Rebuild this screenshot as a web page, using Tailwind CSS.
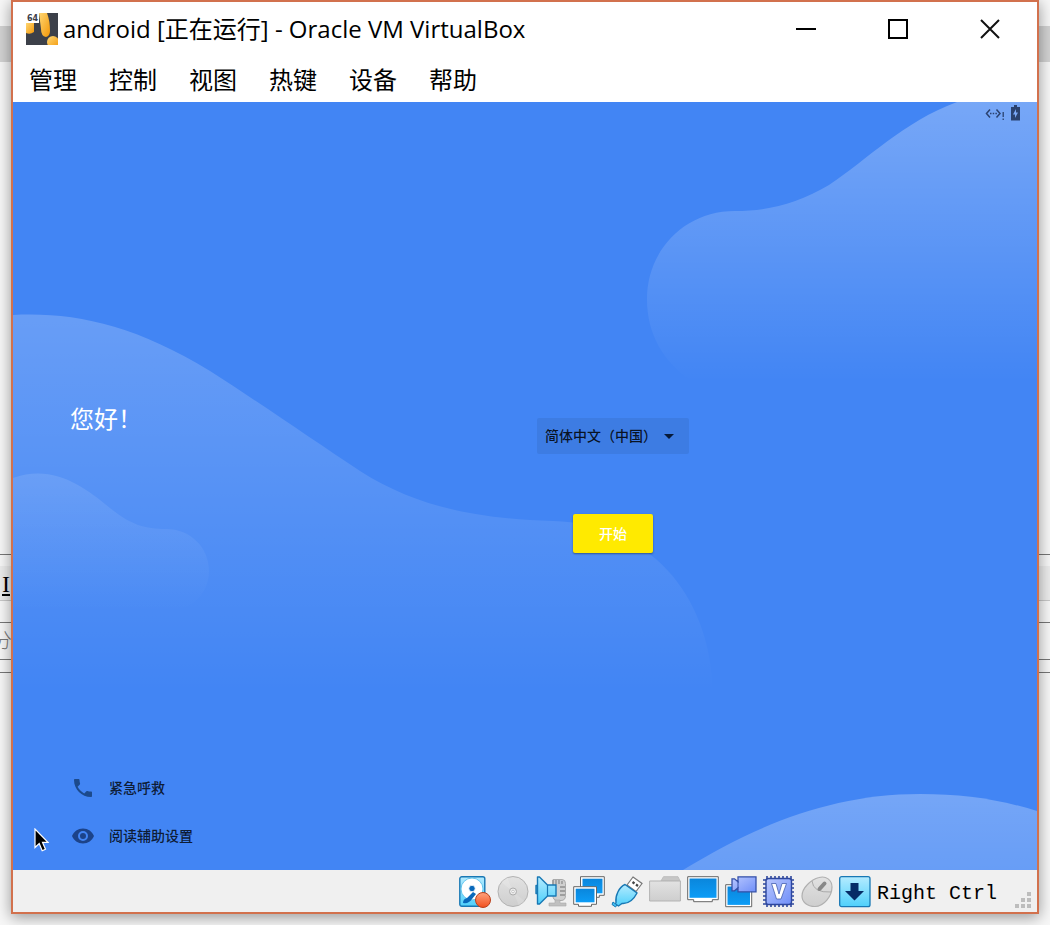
<!DOCTYPE html>
<html lang="zh-CN">
<head>
<meta charset="utf-8">
<meta name="viewport" content="width=device-width, initial-scale=1">
<title>android [正在运行] - Oracle VM VirtualBox</title>
<script src="https://cdn.jsdelivr.net/npm/@tailwindcss/browser@4"></script>
</head>
<body class="relative flex min-h-screen flex-col overflow-hidden bg-[#f7f7f7] px-[11px] pb-[11px] font-['Open_Sans','Noto_Sans_CJK_SC',sans-serif] text-black">

<!-- Document behind the window -->
<div class="absolute inset-0 flex flex-col font-['Liberation_Serif','Noto_Sans_CJK_SC',serif]">
  <div class="h-[26px]"></div>
  <div class="h-9 bg-[#d2d2d2]"></div>
  <div class="h-[492px]"></div>
  <div class="h-3 border-t border-[#777]"></div>
  <div class="h-[35px] border-b border-[#c8c8c8] bg-[#ececec] pl-0.5"><span class="text-2xl leading-[36px] underline">I</span></div>
  <div class="h-[21px]"></div>
  <div class="h-[37px] overflow-hidden border-t border-[#777]"><span class="-ml-2 text-xl leading-[36px] font-light text-[#777]">分</span></div>
  <div class="h-[13px] border-t border-[#777]"></div>
  <div class="border-t border-[#777]"></div>
</div>

<main class="relative flex flex-1 flex-col border-2 border-[#d2714d] bg-white shadow-[0_3px_14px_rgba(0,0,0,0.4)]">
  <header class="flex h-[54px] items-center pr-9 pl-[13px]">
    <svg class="size-8 shrink-0" viewBox="0 0 32 32" aria-hidden="true">
      <defs><linearGradient id="amber" x1="0" x2="1" y1="0" y2="1"><stop stop-color="#ffd774"/><stop offset="1" stop-color="#f29708"/></linearGradient></defs>
      <rect width="32" height="32" fill="#3c4049"/>
      <path d="M0 10h8v9q-4 3-8 1z" fill="url(#amber)"/>
      <path d="M13 0h8q3 8 3 18 0 5-4 6-5-1-5-8z" fill="url(#amber)"/>
      <circle cx="27" cy="29" r="6" fill="url(#amber)"/>
      <rect width="13" height="10" fill="#fff"/>
      <text x="6.500" y="8" text-anchor="middle" font-family="DejaVu Sans" font-size="8" font-weight="700" fill="#3c4049">64</text>
    </svg>
    <h1 class="ml-[5px] flex-1 text-2xl whitespace-nowrap">android [正在运行] - Oracle VM VirtualBox</h1>
    <div class="flex gap-[70px]">
      <button aria-label="最小化" class="size-[22px]"><svg viewBox="0 0 22 22" class="size-[22px]"><path d="M1 11h20" stroke="#000" stroke-width="2"/></svg></button>
      <button aria-label="最大化" class="size-[22px]"><svg viewBox="0 0 22 22" class="size-[22px]"><path d="M2 2h18v18H2z" fill="none" stroke="#000" stroke-width="2"/></svg></button>
      <button aria-label="关闭" class="size-[22px]"><svg viewBox="0 0 22 22" class="size-[22px]"><path d="m2 2 18 18M20 2 2 20" stroke="#111" stroke-width="2"/></svg></button>
    </div>
  </header>
  <nav class="flex h-[46px] items-center gap-8 px-4 font-['Noto_Sans_CJK_SC',sans-serif] text-2xl leading-8">
    <button>管理</button><button>控制</button><button>视图</button><button>热键</button><button>设备</button><button>帮助</button>
  </nav>

  <section class="relative flex flex-1 overflow-hidden bg-[#4285f4] font-['Noto_Sans_CJK_SC',sans-serif]">
    <svg class="absolute inset-0 size-full" viewBox="0 0 1024 768" preserveAspectRatio="none" aria-hidden="true">
      <defs>
        <linearGradient id="w1" gradientUnits="userSpaceOnUse" x1="0" y1="212" x2="0" y2="590"><stop stop-color="#fff" stop-opacity=".2"/><stop offset="1" stop-color="#fff" stop-opacity="0"/></linearGradient>
        <linearGradient id="w2" gradientUnits="userSpaceOnUse" x1="0" y1="371" x2="0" y2="510"><stop stop-color="#fff" stop-opacity=".11"/><stop offset="1" stop-color="#fff" stop-opacity="0"/></linearGradient>
        <linearGradient id="w3" gradientUnits="userSpaceOnUse" x1="0" y1="0" x2="0" y2="280"><stop stop-color="#fff" stop-opacity=".28"/><stop offset="1" stop-color="#fff" stop-opacity="0"/></linearGradient>
        <linearGradient id="w4" gradientUnits="userSpaceOnUse" x1="0" y1="692" x2="0" y2="800"><stop stop-color="#fff" stop-opacity=".27"/><stop offset="1" stop-color="#fff" stop-opacity=".17"/></linearGradient>
      </defs>
      <path fill="url(#w1)" d="M0 213C60 210 120 222 197 269C247 301 300 338 347 369C400 403 460 417 540 419C635 422 697 490 700 590H0z"/>
      <path fill="url(#w2)" d="M0 376C40 362 70 384 97 406C118 423 132 427 153 427C178 427 196 446 196 469C196 492 178 510 150 510H0z"/>
      <path fill="url(#w3)" d="M944 0C890 20 855 57 816 83C784 102 754 109 722 109C671 109 634 149 634 197C634 232 650 260 680 280H1024V0z"/>
      <path fill="url(#w4)" d="M670 768C745 722 820 692 907 692C950 692 985 697 1024 709V768z"/>
    </svg>

    <div class="relative flex w-1/2 flex-col justify-between pt-[300px] pb-[11px] pl-[57px]">
      <h2 class="text-2xl leading-8 text-white">您好！</h2>
      <div class="flex flex-col items-start text-sm font-medium text-black/80">
        <button class="flex h-12 items-center gap-[15px]"><svg class="size-6 shrink-0 text-[#1c4a8c]" viewBox="0 0 24 24" fill="currentColor" aria-hidden="true"><path transform="translate(1 1)" d="M6.620 10.790c1.440 2.830 3.760 5.140 6.590 6.590l2.200-2.200c.27-.27.67-.36 1.020-.24 1.120.37 2.330.57 3.570.57.550 0 1 .45 1 1V20c0 .55-.45 1-1 1-9.390 0-17-7.610-17-17 0-.55.45-1 1-1h3.500c.55 0 1 .45 1 1 0 1.250.2 2.450.57 3.570.11.35.03.74-.25 1.020z"/></svg>紧急呼救</button>
        <button class="flex h-12 items-center gap-[15px]"><svg class="size-6 shrink-0 text-[#1c4389]" viewBox="0 0 24 24" fill="currentColor" aria-hidden="true"><path transform="translate(1 1)" d="M12 4.500C7 4.500 2.730 7.610 1 12c1.730 4.390 6 7.500 11 7.500s9.270-3.110 11-7.500c-1.730-4.390-6-7.500-11-7.500M12 17a5 5 0 1 1 0-10 5 5 0 0 1 0 10m0-8a3 3 0 1 0 0 6 3 3 0 0 0 0-6"/></svg>阅读辅助设置</button>
      </div>
    </div>
    <div class="relative w-1/2 pt-[316px] pl-3">
      <div class="flex w-[152px] flex-col items-center gap-[60px]">
        <div class="relative w-full">
          <select aria-label="语言" class="h-9 w-full appearance-none rounded-xs bg-[#3d7ce3] pb-0.5 pl-2 text-sm font-medium text-black/85">
            <option>简体中文（中国）</option>
          </select>
          <svg class="pointer-events-none absolute top-4 right-[15px] h-[5px] w-2.5" viewBox="0 0 10 5" aria-hidden="true"><path d="M0 0h10L5 5z" fill="#071a3a"/></svg>
        </div>
        <button class="h-[39px] w-20 rounded-xs bg-[#ffea00] pb-0.5 text-sm font-medium text-white shadow-[0_1px_2px_rgba(0,0,0,0.4)]">开始</button>
      </div>
    </div>

    <div class="absolute top-[3px] right-[17px] flex items-center gap-1.5 text-[#2b4270]">
      <svg class="h-4 w-5" viewBox="0 0 20 16" fill="none" stroke="currentColor" aria-hidden="true"><path d="M5 4.500 1.500 8.500 5 12.500M11.500 4.500 15 8.500l-3.500 4" stroke-width="1.500"/><path d="M5 8.500h1.500M7.700 8.500h1.500M10.400 8.500h1.500" stroke-width="1.500"/><path d="M18.200 7v5M18.200 13.500V15" stroke-width="1.300"/></svg>
      <svg class="h-4 w-[9px]" viewBox="0 0 9 16" aria-hidden="true"><path d="M3 0h3v2h3v13.500H0V2h3z" fill="currentColor"/><path d="M5 4 2 9.500h2V13l3-5.500H5z" fill="#7ba8f6"/></svg>
    </div>
    <svg class="absolute bottom-[18px] left-[21px] h-6 w-[15px]" viewBox="0 0 15 24" aria-hidden="true"><path d="M1 1v18.500l4.200-4 3 7.200 3.300-1.400-3-7H14z" fill="#000" stroke="#fff" stroke-width="1.200"/></svg>
  </section>

  <footer class="flex h-[42px] items-center justify-end gap-1.5 bg-[#f0f0f0] pt-0.5 pr-1.5">
    <svg class="size-8" viewBox="0 0 32 32" role="img" aria-label="硬盘">
      <defs>
        <linearGradient id="cy" x1="0" x2="0" y1="0" y2="1"><stop stop-color="#b4ebff"/><stop offset="1" stop-color="#4fd0fb"/></linearGradient>
        <linearGradient id="bl" x1="0" x2="0" y1="0" y2="1"><stop stop-color="#0a86dc"/><stop offset="1" stop-color="#0c9cf6"/></linearGradient>
        <linearGradient id="vi" x1="0" x2="1" y1="0" y2="1"><stop stop-color="#b9c8ff"/><stop offset="1" stop-color="#6f8ef8"/></linearGradient>
        <linearGradient id="gr" x1="0" x2="0" y1="0" y2="1"><stop stop-color="#e2e2e2"/><stop offset="1" stop-color="#cecece"/></linearGradient>
        <linearGradient id="or" x1="0" x2="0" y1="0" y2="1"><stop stop-color="#ffa27c"/><stop offset="1" stop-color="#f1501f"/></linearGradient>
      </defs>
      <rect x=".8" y=".8" width="25" height="29.500" rx="2" fill="url(#cy)" stroke="#1878b4" stroke-width="1.400"/>
      <circle cx="13" cy="13" r="11" fill="#fff" stroke="#65c6ee"/>
      <path d="M4 27q0-4 4-5l6-6 3 2-4 5q-3 5-9 4z" fill="#0969bb"/>
      <circle cx="13" cy="12.500" r="3.200" fill="#0969bb" stroke="#fff" stroke-width=".8"/>
      <circle cx="24" cy="24" r="7.500" fill="url(#or)" stroke="#b9401c"/>
    </svg>
    <svg class="size-8" viewBox="0 0 32 32" role="img" aria-label="光驱"><circle cx="16" cy="15.500" r="15" fill="url(#gr)" stroke="#b2b2b2"/><path d="M16 15.500 4 6a15 15 0 0 1 6-5zM16 15.500l12 10a15 15 0 0 1-6 4z" fill="#fff" opacity=".15"/><circle cx="16" cy="15.500" r="3.500" fill="#ececec" stroke="#ababab"/><circle cx="16" cy="15.500" r="1.300" fill="#fff" stroke="#aaa" stroke-width=".6"/></svg>
    <svg class="size-8" viewBox="0 0 32 32" role="img" aria-label="声音">
      <path d="M18 3.500h9q3.500 0 3.500 4v12q0 5-4.500 5h-4q-4 0-4-5z" fill="#d0d0d0" stroke="#aaa"/><path d="M18 4v5M21 4v5M24 4v4M27 5v3M25 11h5M25 15h5M25 19h5" stroke="#8f8f8f" stroke-width="1.300"/><path d="M20 24v3h-6v3h17v-3h-6v-3z" fill="#c0c0c0" stroke="#aaa" stroke-width=".6"/>
      <path d="M2.500 9.500v8H1v-8zM2.500 9V1h2l8 8H21v11h-8.500l-8 8h-2z" fill="url(#cy)" stroke="#1878b4" stroke-width="1.400" stroke-linejoin="round"/><path d="M12.500 9v11" stroke="#1878b4" stroke-width="1.200"/>
    </svg>
    <svg class="size-8" viewBox="0 0 32 32" role="img" aria-label="网络">
      <path d="M7.500.7h23.800v18.600h-5v2h-14v-2H7.500z" fill="#fff" stroke="#666"/><path d="M9.500 2.700h20v14.600h-20z" fill="url(#bl)"/>
      <path d="M.7 10.700h22.800v17.600h-5v2h-13v-2H.7z" fill="#fff" stroke="#666"/><path d="M2.700 12.700h18.800v13.600H2.700z" fill="url(#bl)"/>
    </svg>
    <svg class="size-8" viewBox="0 0 32 32" role="img" aria-label="USB">
      <path d="m22 1 9 6.500-6 8-9-6.500z" fill="#fff" stroke="#777" stroke-width="1.200"/><path d="m21.500 6 2 1.500M25 8.500l2 1.500" stroke="#444" stroke-width="2.200"/>
      <path d="M14 8.500 26 17c-3 6-8 11-15 10.500L7.500 30l-3-2 .5-1.500C4 20 8 11 14 8.500z" fill="url(#cy)" stroke="#1878b4" stroke-width="1.400"/><path d="m2 26 4 3-1.500 2L1 28.500z" fill="#42bdf0" stroke="#1878b4"/>
    </svg>
    <svg class="size-8" viewBox="0 0 32 32" role="img" aria-label="共享文件夹"><path d="M12 5 14.500.7H29L31 5z" fill="#c6c6c6" stroke="#bdbdbd"/><path d="M.6 5h30.800v20H.6z" fill="url(#gr)" stroke="#b3b3b3"/></svg>
    <svg class="size-8" viewBox="0 0 32 32" role="img" aria-label="显示"><path d="M.7.7h30.600v23h-6v2H6.700v-2h-6z" fill="#fff" stroke="#666"/><path d="M2.500 2.500h27v19.300h-27z" fill="url(#bl)"/></svg>
    <svg class="size-8" viewBox="0 0 32 32" role="img" aria-label="录像"><path d="M.7 8.700h26v22H.7z" fill="#fff" stroke="#666"/><path d="M2.500 10.500h22.500v18.400H2.500z" fill="url(#bl)"/><path d="M13 .8h18v15H13v-4l-3.500 3H7v-12h2.500l3.500 3z" fill="url(#vi)" stroke="#3550a8" stroke-width="1.300"/><path d="M13 5v7" stroke="#3550a8"/></svg>
    <svg class="size-8" viewBox="0 0 32 32" role="img" aria-label="虚拟化"><path d="M4 0v4M8 0v4M12 0v4M16 0v4M20 0v4M24 0v4M28 0v4M4 27v4M8 27v4M12 27v4M16 27v4M20 27v4M24 27v4M28 27v4M0 4h4M0 8h4M0 12h4M0 16h4M0 20h4M0 24h4M0 28h4M27 4h4M27 8h4M27 12h4M27 16h4M27 20h4M27 24h4M27 28h4" stroke="#2d469c" stroke-width="1.600"/><rect x="3" y="2.500" width="25.500" height="26" rx="2.500" fill="url(#vi)" stroke="#2d469c" stroke-width="1.400"/><path d="M8.500 7.500h4.500l3 10.500 3-10.500h4.500L18 23h-4.500z" fill="#fff" stroke="#4560b0" stroke-width=".8"/></svg>
    <svg class="size-8" viewBox="0 0 32 32" role="img" aria-label="鼠标"><path d="M18 1.500C25-.5 31 4 31 11c0 9-8 19.500-17 19.500C6 30.500 1 26 1 20 1 12 10 3.500 18 1.500z" fill="url(#gr)" stroke="#b0b0b0" stroke-width="1.200"/><path d="M11 5q1 12 19 11" fill="none" stroke="#aaa"/><path d="m18.500 13 5-5.500" stroke="#888" stroke-width="4" stroke-linecap="round"/></svg>
    <svg class="size-8" viewBox="0 0 32 32" role="img" aria-label="键盘"><rect x=".7" y=".7" width="30.300" height="30" rx="2" fill="url(#cy)" stroke="#1878b4" stroke-width="1.300"/><path d="M11.500 7h8v8H25l-9.500 9.500L6 15h5.500z" fill="#062c66"/></svg>
    <span class="pt-1 font-['Liberation_Mono',monospace] text-xl leading-8 whitespace-pre">Right Ctrl</span>
    <svg class="mt-4 ml-3 size-4" viewBox="0 0 16 16" fill="#bdbdbd" aria-hidden="true"><path d="M12 0h4v4h-4zM6 6h4v4H6zM12 6h4v4h-4zM0 12h4v4H0zM6 12h4v4H6zM12 12h4v4h-4z"/></svg>
  </footer>
</main>
</body>
</html>
